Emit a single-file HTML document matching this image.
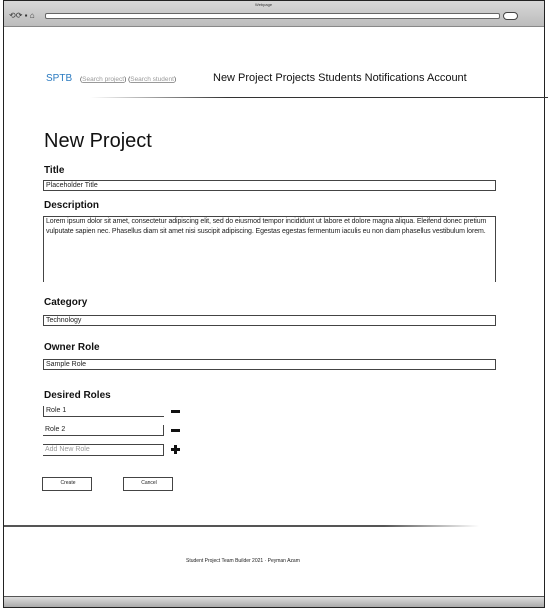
<!DOCTYPE html>
<html><head><style>
*{margin:0;padding:0;box-sizing:border-box}
body{width:548px;height:610px;background:#fff;font-family:"Liberation Sans",sans-serif;position:relative;overflow:hidden;color:#111}
.a{position:absolute}
.lbl{font-weight:bold;font-size:10px}
.inp{border:1.5px solid #444;background:#fff;font-size:7px;padding-left:2px;line-height:9px;color:#222}
.sm{font-size:6px;color:#333}
</style></head><body>
<div class="a" style="left:3px;top:0;width:542px;height:608px;border:1.5px solid #222"></div>
<div class="a" style="left:4px;top:1px;width:540px;height:26px;background:linear-gradient(#d8d8d8,#bcbcbc);border-bottom:1px solid #888"></div>
<div class="a sm" style="left:255px;top:2px;font-size:4px">Webpage</div>
<div class="a" style="left:9px;top:11px;font-size:8px;color:#333">⟲⟳ ▪ ⌂</div>
<div class="a" style="left:45px;top:13px;width:455px;height:6px;background:#fff;border:1px solid #666;border-radius:2px"></div>
<div class="a" style="left:503px;top:12px;width:15px;height:8px;border:1px solid #444;border-radius:4px;background:#fff"></div>
<div class="a" style="left:4px;top:596px;width:540px;height:11px;background:linear-gradient(#ddd,#aaa);border-top:1px solid #555"></div>

<div class="a" style="left:46px;top:73px;font-size:10px;color:#2a7ac0">SPTB</div>
<div class="a sm" style="left:80px;top:76px;font-size:6.5px">(<u style="color:#999">Search project</u>) (<u style="color:#999">Search student</u>)</div>
<div class="a" style="left:213px;top:72px;font-size:11px;white-space:nowrap">New Project Projects Students Notifications Account</div>
<div class="a" style="left:90px;top:97px;width:458px;height:1px;background:linear-gradient(90deg,#fff,#333 30%)"></div>

<div class="a" style="left:44px;top:130px;font-size:20px">New Project</div>
<div class="a lbl" style="left:44px;top:165px">Title</div>
<div class="a inp" style="left:43px;top:180px;width:453px;height:11px">Placeholder Title</div>
<div class="a lbl" style="left:44px;top:200px">Description</div>
<div class="a inp" style="left:43px;top:216px;width:453px;height:66px;border-bottom:none;font-size:7px;line-height:10px;letter-spacing:-0.1px">Lorem ipsum dolor sit amet, consectetur adipiscing elit, sed do eiusmod tempor incididunt ut labore et dolore magna aliqua. Eleifend donec pretium vulputate sapien nec. Phasellus diam sit amet nisi suscipit adipiscing. Egestas egestas fermentum iaculis eu non diam phasellus vestibulum lorem.</div>
<div class="a lbl" style="left:44px;top:297px">Category</div>
<div class="a inp" style="left:43px;top:315px;width:453px;height:11px">Technology</div>
<div class="a lbl" style="left:44px;top:342px">Owner Role</div>
<div class="a inp" style="left:43px;top:359px;width:453px;height:11px">Sample Role</div>
<div class="a lbl" style="left:44px;top:390px">Desired Roles</div>
<div class="a inp" style="left:43px;top:406px;width:121px;height:11px;border-top:none;border-right:none">Role 1</div>
<div class="a inp" style="left:43px;top:425px;width:121px;height:11px;border-top:none;border-left:none">Role 2</div>
<div class="a inp" style="left:43px;top:444px;width:121px;height:12px;border-left:none;color:#999">Add New Role</div>
<div class="a" style="left:171px;top:410px;width:9px;height:3px;background:#111"></div>
<div class="a" style="left:171px;top:429px;width:9px;height:3px;background:#111"></div>
<div class="a" style="left:171px;top:448px;width:9px;height:3px;background:#111"></div>
<div class="a" style="left:174px;top:445px;width:3px;height:9px;background:#111"></div>
<div class="a inp" style="left:42px;top:477px;width:50px;height:14px;text-align:center;font-size:5px;line-height:11px">Create</div>
<div class="a inp" style="left:123px;top:477px;width:50px;height:14px;text-align:center;font-size:5px;line-height:11px">Cancel</div>
<div class="a" style="left:4px;top:525px;width:475px;height:2px;background:linear-gradient(90deg,#555 80%,#fff)"></div>
<div class="a sm" style="left:186px;top:558px;font-size:5px;color:#222">Student Project Team Builder 2021 · Peyman Azam</div>
</body></html>
